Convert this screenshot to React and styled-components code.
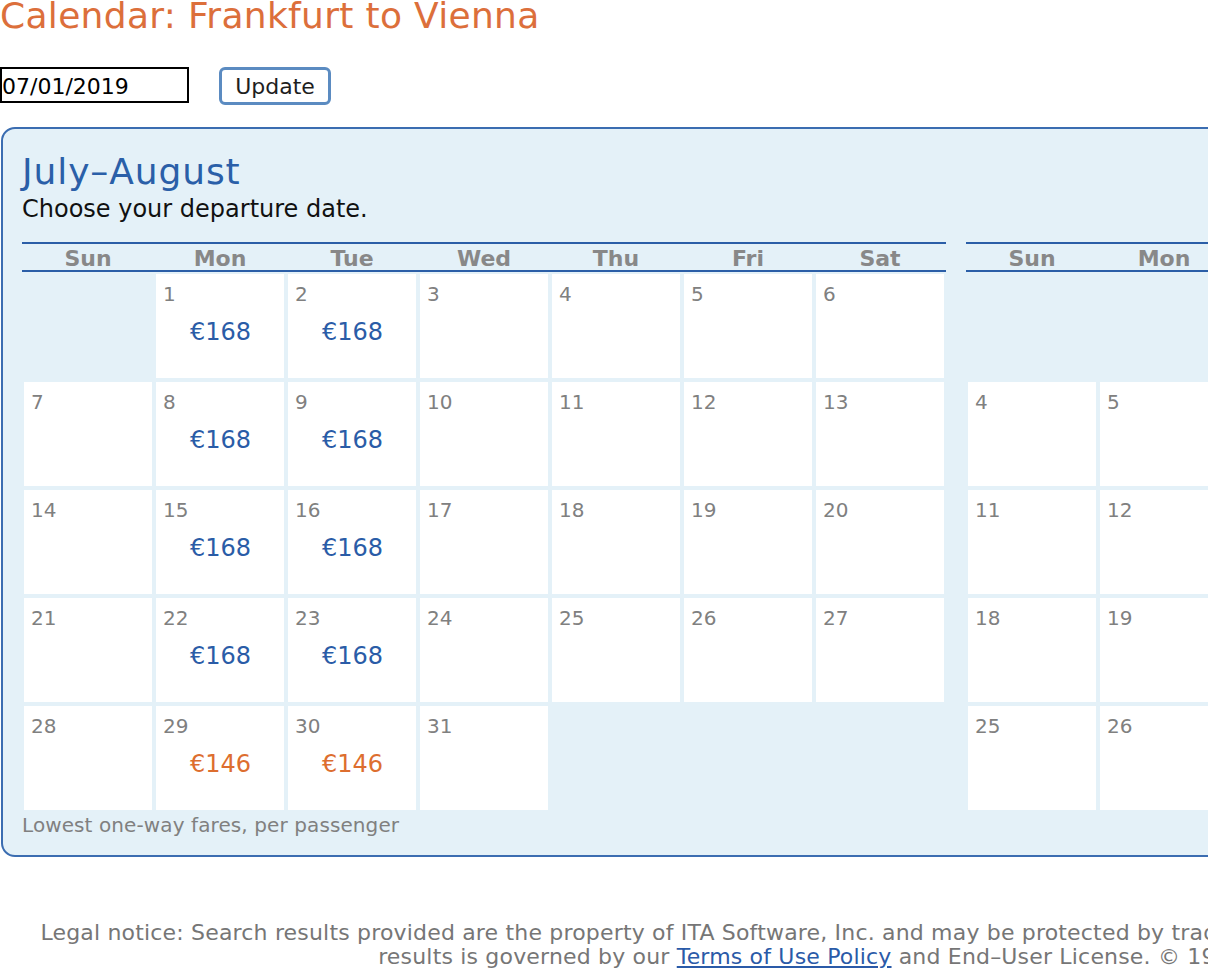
import React from "react";
import styled, { createGlobalStyle } from "styled-components";

const GlobalStyle = createGlobalStyle`
  html { overflow: hidden; }
  body {
    margin: 0;
    background: #ffffff;
    font-family: Verdana, "DejaVu Sans", sans-serif;
    color: #000;
  }
`;

const Page = styled.div`
  width: 2110px;
`;

const Title = styled.h1`
  margin: 0;
  font-size: 36px;
  line-height: 31px;
  font-weight: normal;
  letter-spacing: 0.31px;
  color: #dc6f3b;
`;

const FormRow = styled.div`
  display: flex;
  align-items: flex-start;
  gap: 30px;
  margin-top: 36px;
`;

const DateInput = styled.input`
  box-sizing: border-box;
  width: 189px;
  height: 36px;
  border: 2px solid #000;
  border-radius: 0;
  padding: 2px 0 0 0;
  margin: 0;
  font-family: inherit;
  font-size: 22px;
  color: #000;
  background: #fff;
  outline: none;
`;

const UpdateButton = styled.button`
  box-sizing: border-box;
  width: 112px;
  height: 38px;
  border: 3px solid #5b8bc1;
  border-radius: 6px;
  background: #fff;
  padding: 0;
  margin: 0;
  font-family: inherit;
  font-size: 22px;
  color: #1e1e1e;
`;

const Panel = styled.section`
  box-sizing: border-box;
  width: max-content;
  margin: 22px 0 0 1px;
  padding: 22px 19px 18px 19px;
  background: #e4f1f8;
  border: 2px solid #3b6db1;
  border-radius: 14px;
`;

const MonthsTitle = styled.h2`
  margin: 0;
  font-size: 36px;
  line-height: 42px;
  font-weight: normal;
  letter-spacing: 0.9px;
  color: #2a5fa8;
`;

const Subtitle = styled.div`
  margin-top: 2px;
  font-size: 24px;
  line-height: 28px;
  color: #111;
`;

const Months = styled.div`
  display: flex;
  gap: 20px;
  margin-top: 19px;
`;

const Month = styled.div`
  width: 924px;
`;

const WeekHeader = styled.div`
  display: grid;
  grid-template-columns: repeat(7, 132px);
  border-top: 2px solid #2b5ea7;
  border-bottom: 2px solid #2b5ea7;
  height: 26px;
`;

const DayName = styled.div`
  text-align: center;
  font-weight: bold;
  font-size: 22px;
  line-height: 30px;
  height: 26px;
  color: #888888;
`;

const DaysGrid = styled.div`
  display: grid;
  grid-template-columns: repeat(7, 128px);
  grid-auto-rows: 104px;
  gap: 4px;
  padding: 2px;
`;

const Cell = styled.div`
  box-sizing: border-box;
  background: ${(p) => (p.$empty ? "transparent" : "#ffffff")};
  padding: 9px 6px 0 7px;
`;

const DayNum = styled.div`
  font-size: 20px;
  line-height: 23px;
  color: #808080;
`;

const Price = styled.div`
  margin-top: 12px;
  text-align: center;
  font-size: 24px;
  line-height: 28px;
  color: ${(p) => (p.$cheap ? "#dd6e2f" : "#2a5ca7")};
`;

const Note = styled.div`
  margin-top: 2px;
  font-size: 20px;
  line-height: 23px;
  letter-spacing: 0.1px;
  color: #808080;
`;

const Legal = styled.p`
  margin: 64px 0 0 0;
  text-align: center;
  font-size: 22px;
  line-height: 24px;
  letter-spacing: 0.18px;
  color: #767676;
  white-space: nowrap;
`;

const LegalLink = styled.a`
  color: #2a5aa8;
  text-decoration: underline;
`;

const DAY_NAMES = ["Sun", "Mon", "Tue", "Wed", "Thu", "Fri", "Sat"];

function buildMonth(startDow, days, prices) {
  const cells = [];
  for (let i = 0; i < startDow; i++) cells.push(null);
  for (let d = 1; d <= days; d++) cells.push({ d, price: prices[d] });
  return cells;
}

const julyPrices = {
  1: { v: "€168" }, 2: { v: "€168" },
  8: { v: "€168" }, 9: { v: "€168" },
  15: { v: "€168" }, 16: { v: "€168" },
  22: { v: "€168" }, 23: { v: "€168" },
  29: { v: "€146", cheap: true }, 30: { v: "€146", cheap: true },
};

const months = [
  { key: "jul", cells: buildMonth(1, 31, julyPrices) },
  { key: "aug", cells: buildMonth(4, 31, {}) },
];

function MonthView({ cells }) {
  return (
    <Month>
      <WeekHeader>
        {DAY_NAMES.map((n) => (
          <DayName key={n}>{n}</DayName>
        ))}
      </WeekHeader>
      <DaysGrid>
        {cells.map((c, i) =>
          c ? (
            <Cell key={i}>
              <DayNum>{c.d}</DayNum>
              {c.price && <Price $cheap={c.price.cheap}>{c.price.v}</Price>}
            </Cell>
          ) : (
            <Cell key={i} $empty />
          )
        )}
      </DaysGrid>
    </Month>
  );
}

export default function App() {
  return (
    <>
      <GlobalStyle />
      <Page>
        <Title>Calendar: Frankfurt to Vienna</Title>
        <FormRow>
          <DateInput type="text" defaultValue="07/01/2019" />
          <UpdateButton type="button">Update</UpdateButton>
        </FormRow>
        <Panel>
          <MonthsTitle>July–August</MonthsTitle>
          <Subtitle>Choose your departure date.</Subtitle>
          <Months>
            {months.map((m) => (
              <MonthView key={m.key} cells={m.cells} />
            ))}
          </Months>
          <Note>Lowest one-way fares, per passenger</Note>
        </Panel>
        <Legal>
          Legal notice: Search results provided are the property of ITA Software, Inc. and may be protected by trade secret, copyright and other intellectual property laws. Use of these search
          <br />
          results is governed by our <LegalLink href="#">Terms of Use Policy</LegalLink> and End–User License. © 1999–2019 ITA Software, Inc. All rights reserved.
        </Legal>
      </Page>
    </>
  );
}
